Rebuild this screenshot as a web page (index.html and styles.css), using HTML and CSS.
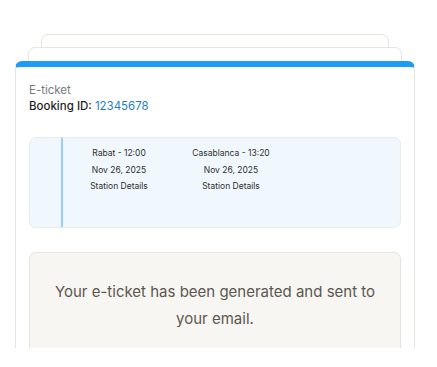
FILE: index.html
```html
<!DOCTYPE html>
<html lang="en">
<head>
<meta charset="utf-8">
<link rel="stylesheet" href="styles.css">
</head>
<body>
<div class="stage">
  <div class="stack">
    <div class="back back-1"></div>
    <div class="back back-2"></div>
    <div class="card">
      <div class="label">E-ticket</div>
      <div class="booking">Booking ID: <span class="booking-id">12345678</span></div>
      <div class="route">
        <div class="route-rail"></div>
        <div class="route-cols">
          <div class="col">
            <div>Rabat - 12:00</div>
            <div>Nov 26, 2025</div>
            <div>Station Details</div>
          </div>
          <div class="col">
            <div>Casablanca - 13:20</div>
            <div>Nov 26, 2025</div>
            <div>Station Details</div>
          </div>
        </div>
      </div>
      <div class="notice">Your e-ticket has been generated and sent to your email.</div>
    </div>
  </div>
</div>
</body>
</html>
```
FILE: styles.css
```css
* { box-sizing: border-box; }
html, body { margin: 0; padding: 0; background: #fff; }
body { font-family: Inter, "Noto Sans", sans-serif; }

.stage {
  height: 348px;
  overflow: hidden;
  padding-top: 34px;
}
.stack {
  width: 400px;
  margin-left: 15px;
}
.back {
  background: #fff;
  border: 1px solid #e6e4de;
  border-radius: 7px 7px 0 0;
  height: 20px;
  margin-bottom: -7px;
}
.back-1 { margin-left: 26px; margin-right: 26px; }
.back-2 { margin-left: 13px; margin-right: 13px; height: 21px; }

.card {
  background: #fff;
  border: 1px solid #e6e4de;
  border-top: 6px solid #1c9cf4;
  border-radius: 7px 7px 0 0;
  padding: 15px 13px 40px;
  min-height: 400px;
}
.label {
  font-size: 11.5px;
  line-height: 16px;
  color: #7a7a7a;
}
.booking {
  font-size: 11.5px;
  line-height: 16px;
  color: #1f1f1f;
  font-weight: 500;
}
.booking-id {
  color: #1f7fc4;
  font-weight: 400;
}

.route {
  margin-top: 23px;
  display: flex;
  height: 91px;
  background: #f0f8fd;
  border: 1px solid #e3ecf0;
  border-radius: 7px;
}
.route-rail {
  width: 33px;
  border-right: 2px solid #94d0fa;
}
.route-cols {
  display: flex;
  padding-top: 7px;
}
.col {
  width: 112px;
  text-align: center;
  font-size: 8.5px;
  line-height: 16.5px;
  color: #2e2e2e;
}

.notice {
  margin-top: 24px;
  background: #f7f6f3;
  border: 1px solid #e6e3dc;
  border-radius: 7px;
  padding: 25px 16px 40px;
  text-align: center;
  font-size: 15px;
  line-height: 27px;
  color: #5c574f;
  min-height: 200px;
}
```
